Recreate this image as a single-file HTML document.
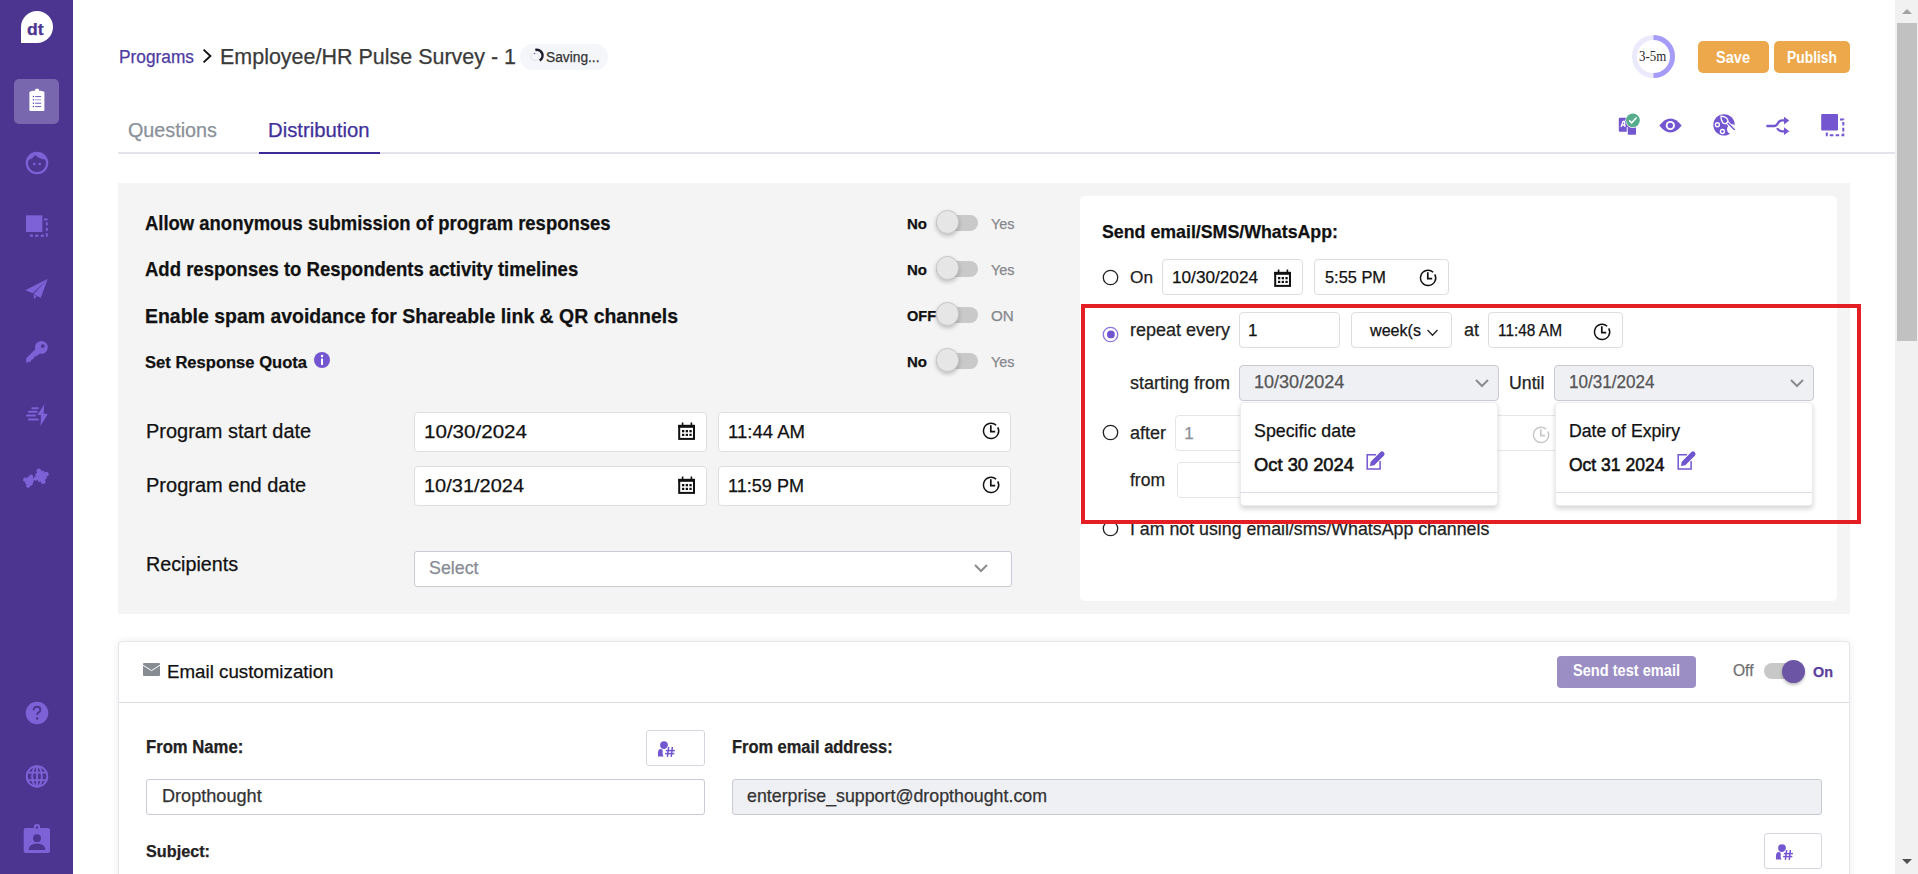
<!DOCTYPE html>
<html><head><meta charset="utf-8"><style>
html,body{margin:0;padding:0;width:1918px;height:874px;overflow:hidden;background:#fff;font-family:"Liberation Sans",sans-serif;}
.t{position:absolute;white-space:nowrap;-webkit-text-stroke-width:0.25px;}
.b{position:absolute;box-sizing:border-box;}
</style></head><body>
<div class="b" style="left:0px;top:0px;width:73px;height:874px;background:#4b3590;"></div>
<div class="b" style="left:21px;top:11px;width:32px;height:32px;background:#fff;border-radius:16px 16px 16px 0;"></div>
<div class="t" style="left:27px;top:21px;font-size:16.5px;line-height:16.5px;font-weight:700;color:#4b3590;font-family:'Liberation Sans', sans-serif;transform:scaleX(1.0656);transform-origin:0 0;">dt</div>
<div class="b" style="left:14px;top:79px;width:45px;height:45px;background:#7867ae;border-radius:5px;"></div>
<svg class="b" style="left:14px;top:79px" width="45" height="45" viewBox="0 0 45 45">
<rect x="15.4" y="12.6" width="15" height="19.3" rx="1" fill="#fff"/>
<path d="M16.2 13.5 Q16.8 11.7 19 11.7 H26.8 Q29 11.7 29.6 13.5Z" fill="#fff"/>
<rect x="21.1" y="9.8" width="3.9" height="2.8" rx="1" fill="#fff"/>
<g fill="#5546b0"><rect x="18.8" y="16.9" width="1.3" height="1.3"/><rect x="18.8" y="20.1" width="1.3" height="1.3"/><rect x="18.8" y="23.6" width="1.3" height="1.3"/><rect x="18.8" y="26.9" width="1.3" height="1.3"/></g>
<g fill="#7b6bc2"><rect x="21.1" y="17" width="6" height="1.1"/><rect x="21.1" y="20.2" width="6" height="1.1" opacity="0.6"/><rect x="21.1" y="23.7" width="6" height="1.1"/><rect x="21.1" y="27" width="6" height="1.1"/></g>
</svg>
<svg class="b" style="left:24px;top:150px" width="26" height="26" viewBox="0 0 26 26">
<circle cx="13" cy="13" r="10.2" fill="none" stroke="#7c62d6" stroke-width="2.2"/>
<path d="M3.5 10 Q8.5 9.5 11 5 Q15 9.2 22.8 9.8 Q21.5 3.5 13 2.5 Q5 3 3.5 10Z" fill="#7c62d6"/>
<circle cx="10.3" cy="14" r="1.3" fill="#7c62d6"/><circle cx="15.7" cy="14" r="1.3" fill="#7c62d6"/>
</svg>
<svg class="b" style="left:24px;top:213px" width="26" height="26" viewBox="0 0 26 26">
<rect x="2" y="2.3" width="16.4" height="16.7" fill="#7c62d6"/>
<path d="M20 6.5 H22.8 V22.8 H7 V20.5" fill="none" stroke="#7c62d6" stroke-width="1.9" stroke-dasharray="3.2 2.3"/>
</svg>
<svg class="b" style="left:24px;top:277px" width="26" height="26" viewBox="0 0 26 26">
<path d="M1.3 13.2 L23.8 1.8 L8.8 16.2Z" fill="#7c62d6"/>
<path d="M23.8 1.8 L16.7 21 L9.6 16.9Z" fill="#7c62d6"/>
<path d="M9.6 17.6 L12.7 19.3 L10 22.3Z" fill="#7c62d6"/>
</svg>
<svg class="b" style="left:22px;top:337px" width="30" height="30" viewBox="0 0 30 30">
<circle cx="19.4" cy="10.4" r="6.4" fill="#7c62d6"/><circle cx="20.8" cy="9.1" r="1.9" fill="#4b3590"/>
<path d="M13.4 12.1 L17.8 16.5 L15.8 18.5 L12 19.9 L12 21.6 L9.1 22.9 L9.1 24.4 L4.2 25.8 L4.1 21.4 Z" fill="#7c62d6"/>
</svg>
<svg class="b" style="left:24px;top:402px" width="26" height="26" viewBox="0 0 26 26">
<path d="M20.3 2.5 L13.3 13 L17 13.3 L16.5 23.9 L23.8 11.9 L19.5 11.6Z" fill="#7c62d6"/>
<g stroke="#7c62d6" stroke-width="2" stroke-linecap="round"><line x1="8.3" y1="6.2" x2="13.8" y2="6.2"/><line x1="4.8" y1="9.8" x2="12.8" y2="9.8"/><line x1="3" y1="13.6" x2="11.2" y2="13.6"/><line x1="4.8" y1="17.6" x2="13.8" y2="17.6"/></g>
</svg>
<svg class="b" style="left:20px;top:463px" width="32" height="30" viewBox="0 0 32 30">
<g fill="#7c62d6" transform="rotate(-22 21 13.3)"><rect x="16.4" y="8.7" width="9.2" height="9.2" rx="1"/><circle cx="21" cy="7.6" r="2.4"/><circle cx="26.7" cy="13.3" r="2.4"/><circle cx="21" cy="19" r="2.4"/><circle cx="15.3" cy="13.3" r="2.2"/></g>
<g fill="#7c62d6" transform="rotate(18 9.6 18.2)"><rect x="5.8" y="14.4" width="7.6" height="7.6" rx="1"/><circle cx="9.6" cy="13.5" r="2.1"/><circle cx="4.9" cy="18.2" r="2.1"/><circle cx="9.6" cy="22.9" r="2.1"/></g>
</svg>
<svg class="b" style="left:25px;top:701px" width="24" height="24" viewBox="0 0 24 24">
<circle cx="12" cy="12" r="11.3" fill="#7c62d6"/>
<path d="M8.6 9.3 Q8.6 5.8 12 5.8 Q15.4 5.8 15.4 8.8 Q15.4 10.6 13.4 11.6 Q12.2 12.3 12.2 14" fill="none" stroke="#4b3590" stroke-width="1.9"/>
<circle cx="12.2" cy="17.5" r="1.3" fill="#4b3590"/>
</svg>
<svg class="b" style="left:25px;top:765px" width="24" height="23" viewBox="0 0 24 23">
<g fill="none" stroke="#7c62d6" stroke-width="1.9"><circle cx="12" cy="11.4" r="10.3"/><ellipse cx="12" cy="11.4" rx="4.8" ry="10.3"/>
<line x1="1.7" y1="7.6" x2="22.3" y2="7.6"/><line x1="1.7" y1="15.2" x2="22.3" y2="15.2"/><line x1="12" y1="1" x2="12" y2="21.8"/></g>
</svg>
<svg class="b" style="left:23px;top:823px" width="28" height="32" viewBox="0 0 28 32">
<rect x="0.7" y="5" width="26.3" height="25" rx="2" fill="#7c62d6"/>
<circle cx="14" cy="4.3" r="3.2" fill="#7c62d6"/><circle cx="14" cy="4.5" r="1.2" fill="#4b3590"/>
<circle cx="14" cy="15.2" r="3.9" fill="#4b3590"/><path d="M5.5 27 Q6 20.5 14 20.5 Q22 20.5 22.5 27Z" fill="#4b3590"/>
</svg>
<div class="b" style="left:1895px;top:0px;width:23px;height:874px;background:#f1f1f1;"></div>
<div class="b" style="left:1897px;top:23px;width:20px;height:318px;background:#c1c1c1;"></div>
<svg class="b" style="left:1900px;top:6px" width="14" height="10"><path d="M2 8 L7 3 L12 8Z" fill="#a3a3a3"/></svg>
<svg class="b" style="left:1900px;top:857px" width="14" height="10"><path d="M2 2 L7 7 L12 2Z" fill="#505050"/></svg>
<div class="t" style="left:118.8px;top:49px;font-size:17.6px;line-height:17.6px;font-weight:400;color:#4e3ca2;font-family:'Liberation Sans', sans-serif;transform:scaleX(0.9834);transform-origin:0 0;">Programs</div>
<svg class="b" style="left:200px;top:47px" width="14" height="20"><path d="M3.6 2.6 L10.4 9 L3.6 15.4" fill="none" stroke="#111" stroke-width="1.9"/></svg>
<div class="t" style="left:219.8px;top:46px;font-size:22.2px;line-height:22.2px;font-weight:400;color:#3a3a3a;font-family:'Liberation Sans', sans-serif;transform:scaleX(0.9679);transform-origin:0 0;">Employee/HR Pulse Survey - 1</div>
<div class="b" style="left:520px;top:44px;width:88px;height:26px;background:#f5f6f9;border-radius:13px;"></div>
<svg class="b" style="left:528px;top:46px" width="18" height="18" viewBox="0 0 18 18"><circle cx="6.8" cy="10.8" r="3.8" fill="none" stroke="#e6e6ee" stroke-width="1.2"/><circle cx="6.6" cy="7.6" r="0.7" fill="#5a3fc0"/><path d="M7.31 3.95 A5.75 5.75 0 0 1 11.68 14.48" fill="none" stroke="#1f1b2e" stroke-width="2.5"/></svg>
<div class="t" style="left:545.5px;top:50px;font-size:14px;line-height:14px;font-weight:400;color:#333;font-family:'Liberation Sans', sans-serif;transform:scaleX(0.9819);transform-origin:0 0;">Saving...</div>
<svg class="b" style="left:1632px;top:35px" width="43" height="43" viewBox="0 0 43 43"><circle cx="21.5" cy="21.5" r="19" fill="none" stroke="#ebe9fc" stroke-width="5"/><path d="M21.5 2.5 A19 19 0 0 1 21.5 40.5" fill="none" stroke="#a49cf7" stroke-width="5"/></svg>
<div class="t" style="left:1638.8px;top:49px;font-size:14.8px;line-height:14.8px;font-weight:400;color:#2a2a2a;font-family:'Liberation Serif', serif;-webkit-text-stroke-width:0;transform:scaleX(0.8708);transform-origin:0 0;">3-5m</div>
<div class="b" style="left:1698px;top:41px;width:71px;height:32px;background:#eca84a;border-radius:5px;"></div>
<div class="t" style="left:1716.4px;top:50px;font-size:15.6px;line-height:15.6px;font-weight:700;color:#fff;font-family:'Liberation Sans', sans-serif;-webkit-text-stroke-width:0;transform:scaleX(0.9335);transform-origin:0 0;">Save</div>
<div class="b" style="left:1774px;top:41px;width:76px;height:32px;background:#eca84a;border-radius:5px;"></div>
<div class="t" style="left:1787.3px;top:50px;font-size:15.6px;line-height:15.6px;font-weight:700;color:#fff;font-family:'Liberation Sans', sans-serif;-webkit-text-stroke-width:0;transform:scaleX(0.8877);transform-origin:0 0;">Publish</div>
<div class="t" style="left:128px;top:120px;font-size:20px;line-height:20px;font-weight:400;color:#8a9199;font-family:'Liberation Sans', sans-serif;transform:scaleX(0.9882);transform-origin:0 0;">Questions</div>
<div class="t" style="left:268px;top:120px;font-size:20.3px;line-height:20.3px;font-weight:400;color:#40309a;font-family:'Liberation Sans', sans-serif;transform:scaleX(1.0005);transform-origin:0 0;">Distribution</div>
<div class="b" style="left:118px;top:152px;width:1777px;height:2px;background:#e3e3ec;"></div>
<div class="b" style="left:259px;top:152px;width:121px;height:2px;background:#3b2a96;"></div>
<svg class="b" style="left:1614px;top:110px" width="30" height="30" viewBox="0 0 30 30">
<rect x="4.8" y="7.7" width="9.3" height="14.1" rx="1" fill="#7356d0"/>
<rect x="13.7" y="14" width="8.3" height="10.7" rx="1" fill="#7356d0"/>
<path d="M13.2 17 V22.5 L11.5 23.3 L13.6 24.8" fill="none" stroke="#fff" stroke-width="1"/>
<path d="M7 17 L9 11.5 L10.3 11.5 L11 17 M7.8 15 H10.6" fill="none" stroke="#fff" stroke-width="1.3"/>
<circle cx="18.9" cy="10.3" r="7.6" fill="#fff"/>
<circle cx="18.9" cy="10.3" r="6.9" fill="#55ad8c"/>
<path d="M15.2 10.4 L17.6 12.8 L22.6 7.5" fill="none" stroke="#fff" stroke-width="1.5"/>
</svg>
<svg class="b" style="left:1659px;top:117px" width="23" height="17" viewBox="0 0 23 17">
<path d="M0.3 8.5 Q11.5 -5.5 22.7 8.5 Q11.5 22.5 0.3 8.5Z" fill="#7356d0"/><circle cx="11.3" cy="8.5" r="4.6" fill="#fff"/><circle cx="11.3" cy="8.5" r="2.7" fill="#7356d0"/>
</svg>
<svg class="b" style="left:1710px;top:110px" width="30" height="30" viewBox="0 0 30 30">
<circle cx="14.05" cy="14.9" r="10.7" fill="#7356d0"/><circle cx="22" cy="19.2" r="5" fill="#fff"/>
<circle cx="7.4" cy="14.75" r="2" fill="none" stroke="#fff" stroke-width="1.3"/>
<circle cx="12.4" cy="21.5" r="2" fill="none" stroke="#fff" stroke-width="1.3"/>
<line x1="17.5" y1="12.8" x2="24.3" y2="19.6" stroke="#fff" stroke-width="3.4" stroke-linecap="round"/>
<line x1="17.5" y1="12.8" x2="24.3" y2="19.6" stroke="#7356d0" stroke-width="1.4" stroke-linecap="round"/>
<path d="M11 6.2 Q17 6.6 18 10.8 A3.2 3.2 0 0 1 12.8 12.8 Q10.6 9.6 11 6.2Z" fill="#7356d0" stroke="#fff" stroke-width="1.3"/>
</svg>
<svg class="b" style="left:1763px;top:110px" width="30" height="30" viewBox="0 0 30 30">
<path d="M4.3 16 H11.5 Q12.8 16 14 14.5 L15.5 12.3 Q17 10.3 19 10.3 H22" fill="none" stroke="#7356d0" stroke-width="2.3" stroke-linecap="round"/>
<path d="M14.6 18.9 Q16.3 21.2 19.5 21.3 H22" fill="none" stroke="#7356d0" stroke-width="2.3" stroke-linecap="round"/>
<path d="M21 6.7 L26.3 10.5 L21 14.5Z" fill="#7356d0"/><path d="M21 17.3 L26.3 21.3 L21 25Z" fill="#7356d0"/>
</svg>
<svg class="b" style="left:1821px;top:114px" width="24" height="23" viewBox="0 0 24 23">
<rect x="0.2" y="0" width="16.8" height="16.6" rx="1" fill="#7356d0"/>
<path d="M19 5.5 H22.3 V21.3 H5.8 V18.5" fill="none" stroke="#7356d0" stroke-width="2" stroke-dasharray="3.6 2.2"/>
</svg>
<div class="b" style="left:118px;top:183px;width:1732px;height:431px;background:#f4f4f4;"></div>
<div class="t" style="left:145.4px;top:213px;font-size:20.6px;line-height:20.6px;font-weight:700;color:#111;font-family:'Liberation Sans', sans-serif;transform:scaleX(0.8960);transform-origin:0 0;">Allow anonymous submission of program responses</div>
<div class="t" style="left:145.4px;top:259px;font-size:20.6px;line-height:20.6px;font-weight:700;color:#111;font-family:'Liberation Sans', sans-serif;transform:scaleX(0.8992);transform-origin:0 0;">Add responses to Respondents activity timelines</div>
<div class="t" style="left:145.4px;top:306px;font-size:20.6px;line-height:20.6px;font-weight:700;color:#111;font-family:'Liberation Sans', sans-serif;transform:scaleX(0.9446);transform-origin:0 0;">Enable spam avoidance for Shareable link &amp; QR channels</div>
<div class="t" style="left:145.4px;top:354px;font-size:17.4px;line-height:17.4px;font-weight:700;color:#111;font-family:'Liberation Sans', sans-serif;transform:scaleX(0.9525);transform-origin:0 0;">Set Response Quota</div>
<svg class="b" style="left:314px;top:352px" width="16" height="16" viewBox="0 0 16 16"><circle cx="8" cy="8" r="8" fill="#7356d0"/><rect x="7" y="6.5" width="2" height="6.5" fill="#fff"/><circle cx="8" cy="4" r="1.2" fill="#fff"/></svg>
<div class="t" style="left:907px;top:217px;font-size:14.6px;line-height:14.6px;font-weight:700;color:#111;font-family:'Liberation Sans', sans-serif;transform:scaleX(1.0273);transform-origin:0 0;">No</div>
<div class="b" style="left:936px;top:215px;width:42px;height:15.699999999999989px;background:#c9c9c9;border-radius:8px;"></div>
<div class="b" style="left:935.8px;top:210.3px;width:23.5px;height:23.5px;background:#e6e6e6;border-radius:50%;box-shadow:0 2px 4px rgba(0,0,0,0.22);border:1px solid #c8c8c8;"></div>
<div class="t" style="left:991px;top:217px;font-size:14.8px;line-height:14.8px;font-weight:400;color:#85878c;font-family:'Liberation Sans', sans-serif;transform:scaleX(0.9735);transform-origin:0 0;">Yes</div>
<div class="t" style="left:907px;top:263px;font-size:14.6px;line-height:14.6px;font-weight:700;color:#111;font-family:'Liberation Sans', sans-serif;transform:scaleX(1.0273);transform-origin:0 0;">No</div>
<div class="b" style="left:936px;top:261px;width:42px;height:15.699999999999989px;background:#c9c9c9;border-radius:8px;"></div>
<div class="b" style="left:935.8px;top:256.3px;width:23.5px;height:23.5px;background:#e6e6e6;border-radius:50%;box-shadow:0 2px 4px rgba(0,0,0,0.22);border:1px solid #c8c8c8;"></div>
<div class="t" style="left:991px;top:263px;font-size:14.8px;line-height:14.8px;font-weight:400;color:#85878c;font-family:'Liberation Sans', sans-serif;transform:scaleX(0.9735);transform-origin:0 0;">Yes</div>
<div class="t" style="left:907px;top:309px;font-size:14.6px;line-height:14.6px;font-weight:700;color:#111;font-family:'Liberation Sans', sans-serif;transform:scaleX(0.9936);transform-origin:0 0;">OFF</div>
<div class="b" style="left:936px;top:307px;width:42px;height:15.699999999999989px;background:#c9c9c9;border-radius:8px;"></div>
<div class="b" style="left:935.8px;top:302.3px;width:23.5px;height:23.5px;background:#e6e6e6;border-radius:50%;box-shadow:0 2px 4px rgba(0,0,0,0.22);border:1px solid #c8c8c8;"></div>
<div class="t" style="left:991px;top:309px;font-size:14.8px;line-height:14.8px;font-weight:400;color:#85878c;font-family:'Liberation Sans', sans-serif;transform:scaleX(1.0269);transform-origin:0 0;">ON</div>
<div class="t" style="left:907px;top:355px;font-size:14.6px;line-height:14.6px;font-weight:700;color:#111;font-family:'Liberation Sans', sans-serif;transform:scaleX(1.0273);transform-origin:0 0;">No</div>
<div class="b" style="left:936px;top:353px;width:42px;height:15.699999999999989px;background:#c9c9c9;border-radius:8px;"></div>
<div class="b" style="left:935.8px;top:348.3px;width:23.5px;height:23.5px;background:#e6e6e6;border-radius:50%;box-shadow:0 2px 4px rgba(0,0,0,0.22);border:1px solid #c8c8c8;"></div>
<div class="t" style="left:991px;top:355px;font-size:14.8px;line-height:14.8px;font-weight:400;color:#85878c;font-family:'Liberation Sans', sans-serif;transform:scaleX(0.9735);transform-origin:0 0;">Yes</div>
<div class="t" style="left:145.6px;top:422px;font-size:19.6px;line-height:19.6px;font-weight:400;color:#111;font-family:'Liberation Sans', sans-serif;transform:scaleX(1.0181);transform-origin:0 0;">Program start date</div>
<div class="t" style="left:145.6px;top:476px;font-size:19.6px;line-height:19.6px;font-weight:400;color:#111;font-family:'Liberation Sans', sans-serif;transform:scaleX(1.0213);transform-origin:0 0;">Program end date</div>
<div class="b" style="left:414px;top:412px;width:293px;height:40px;background:#fff;border:1px solid #dedede;border-radius:4px;"></div>
<div class="b" style="left:718px;top:412px;width:293px;height:40px;background:#fff;border:1px solid #dedede;border-radius:4px;"></div>
<div class="b" style="left:414px;top:466px;width:293px;height:40px;background:#fff;border:1px solid #dedede;border-radius:4px;"></div>
<div class="b" style="left:718px;top:466px;width:293px;height:40px;background:#fff;border:1px solid #dedede;border-radius:4px;"></div>
<div class="t" style="left:424px;top:422px;font-size:19.2px;line-height:19.2px;font-weight:400;color:#111;font-family:'Liberation Sans', sans-serif;transform:scaleX(1.0726);transform-origin:0 0;">10/30/2024</div>
<div class="t" style="left:424px;top:476px;font-size:19.2px;line-height:19.2px;font-weight:400;color:#111;font-family:'Liberation Sans', sans-serif;transform:scaleX(1.0413);transform-origin:0 0;">10/31/2024</div>
<svg class="b" style="left:672px;top:416px" width="30" height="30" viewBox="0 0 30 30"><rect x="7.2" y="9.9" width="14.8" height="13" fill="none" stroke="#111" stroke-width="2"/><rect x="6.2" y="8.9" width="16.8" height="2.9" fill="#111"/><rect x="9.8" y="6.5" width="1.6" height="3" fill="#111"/><rect x="18.6" y="6.5" width="1.6" height="3" fill="#111"/><g fill="#111"><rect x="10" y="14" width="2.3" height="2.3"/><rect x="13.7" y="14" width="2.3" height="2.3"/><rect x="17.4" y="14" width="2.3" height="2.3"/><rect x="10" y="17.8" width="2.3" height="2.2"/><rect x="13.7" y="17.8" width="2.3" height="2.2"/><rect x="17.4" y="17.8" width="2.3" height="2.2"/></g></svg>
<svg class="b" style="left:672px;top:470px" width="30" height="30" viewBox="0 0 30 30"><rect x="7.2" y="9.9" width="14.8" height="13" fill="none" stroke="#111" stroke-width="2"/><rect x="6.2" y="8.9" width="16.8" height="2.9" fill="#111"/><rect x="9.8" y="6.5" width="1.6" height="3" fill="#111"/><rect x="18.6" y="6.5" width="1.6" height="3" fill="#111"/><g fill="#111"><rect x="10" y="14" width="2.3" height="2.3"/><rect x="13.7" y="14" width="2.3" height="2.3"/><rect x="17.4" y="14" width="2.3" height="2.3"/><rect x="10" y="17.8" width="2.3" height="2.2"/><rect x="13.7" y="17.8" width="2.3" height="2.2"/><rect x="17.4" y="17.8" width="2.3" height="2.2"/></g></svg>
<div class="t" style="left:728px;top:423px;font-size:18.5px;line-height:18.5px;font-weight:400;color:#111;font-family:'Liberation Sans', sans-serif;transform:scaleX(1.0026);transform-origin:0 0;">11:44 AM</div>
<div class="t" style="left:728px;top:477px;font-size:18.5px;line-height:18.5px;font-weight:400;color:#111;font-family:'Liberation Sans', sans-serif;transform:scaleX(0.9767);transform-origin:0 0;">11:59 PM</div>
<svg class="b" style="left:976px;top:416px" width="30" height="30" viewBox="0 0 30 30"><path d="M21.75 11.27 A7.6 7.6 0 1 1 20.19 9.3" fill="none" stroke="#111" stroke-width="1.5"/><path d="M14.8 9.3 V15.7 H19.2" fill="none" stroke="#111" stroke-width="1.7"/></svg>
<svg class="b" style="left:976px;top:470px" width="30" height="30" viewBox="0 0 30 30"><path d="M21.75 11.27 A7.6 7.6 0 1 1 20.19 9.3" fill="none" stroke="#111" stroke-width="1.5"/><path d="M14.8 9.3 V15.7 H19.2" fill="none" stroke="#111" stroke-width="1.7"/></svg>
<div class="t" style="left:145.5px;top:555px;font-size:19.5px;line-height:19.5px;font-weight:400;color:#111;font-family:'Liberation Sans', sans-serif;transform:scaleX(1.0105);transform-origin:0 0;">Recipients</div>
<div class="b" style="left:414px;top:551px;width:598px;height:36px;background:#fff;border:1px solid #c9cad3;border-radius:3px;"></div>
<div class="t" style="left:428.5px;top:560px;font-size:17.8px;line-height:17.8px;font-weight:400;color:#888b95;font-family:'Liberation Sans', sans-serif;transform:scaleX(1.0016);transform-origin:0 0;">Select</div>
<svg class="b" style="left:973px;top:563px" width="16" height="11"><path d="M2 2 L8 8 L14 2" fill="none" stroke="#8c8c8c" stroke-width="2"/></svg>
<div class="b" style="left:1080px;top:196px;width:757px;height:405px;background:#fff;border-radius:5px;"></div>
<div class="t" style="left:1102.3px;top:223px;font-size:18.6px;line-height:18.6px;font-weight:700;color:#111;font-family:'Liberation Sans', sans-serif;transform:scaleX(0.9558);transform-origin:0 0;">Send email/SMS/WhatsApp:</div>
<svg class="b" style="left:1102px;top:268.5px" width="17" height="17" viewBox="0 0 17 17"><circle cx="8.5" cy="8.5" r="7.2" fill="#fff" stroke="#222" stroke-width="1.3"/></svg>
<div class="t" style="left:1129.7px;top:269px;font-size:17.4px;line-height:17.4px;font-weight:400;color:#222;font-family:'Liberation Sans', sans-serif;transform:scaleX(0.9912);transform-origin:0 0;">On</div>
<div class="b" style="left:1162px;top:259px;width:141px;height:36px;background:#fff;border:1px solid #dedede;border-radius:4px;"></div>
<div class="t" style="left:1172.3px;top:269px;font-size:16.4px;line-height:16.4px;font-weight:400;color:#111;font-family:'Liberation Sans', sans-serif;transform:scaleX(1.0482);transform-origin:0 0;">10/30/2024</div>
<svg class="b" style="left:1267.8px;top:263.1px" width="30" height="30" viewBox="0 0 30 30"><rect x="7.2" y="9.9" width="14.8" height="13" fill="none" stroke="#111" stroke-width="2"/><rect x="6.2" y="8.9" width="16.8" height="2.9" fill="#111"/><rect x="9.8" y="6.5" width="1.6" height="3" fill="#111"/><rect x="18.6" y="6.5" width="1.6" height="3" fill="#111"/><g fill="#111"><rect x="10" y="14" width="2.3" height="2.3"/><rect x="13.7" y="14" width="2.3" height="2.3"/><rect x="17.4" y="14" width="2.3" height="2.3"/><rect x="10" y="17.8" width="2.3" height="2.2"/><rect x="13.7" y="17.8" width="2.3" height="2.2"/><rect x="17.4" y="17.8" width="2.3" height="2.2"/></g></svg>
<div class="b" style="left:1314px;top:259px;width:135px;height:36px;background:#fff;border:1px solid #dedede;border-radius:4px;"></div>
<div class="t" style="left:1324.5px;top:269px;font-size:16.4px;line-height:16.4px;font-weight:400;color:#111;font-family:'Liberation Sans', sans-serif;transform:scaleX(0.9992);transform-origin:0 0;">5:55 PM</div>
<svg class="b" style="left:1413.3px;top:263.3px" width="30" height="30" viewBox="0 0 30 30"><path d="M21.75 11.27 A7.6 7.6 0 1 1 20.19 9.3" fill="none" stroke="#111" stroke-width="1.5"/><path d="M14.8 9.3 V15.7 H19.2" fill="none" stroke="#111" stroke-width="1.7"/></svg>
<svg class="b" style="left:1102px;top:325.5px" width="17" height="17" viewBox="0 0 17 17"><circle cx="8.5" cy="8.5" r="7.2" fill="#fff" stroke="#8d74dc" stroke-width="1.3"/><circle cx="8.9" cy="8.4" r="3.9" fill="#7055cf"/></svg>
<div class="t" style="left:1129.7px;top:321px;font-size:18px;line-height:18px;font-weight:400;color:#222;font-family:'Liberation Sans', sans-serif;transform:scaleX(0.9994);transform-origin:0 0;">repeat every</div>
<div class="b" style="left:1239px;top:312px;width:101px;height:36px;background:#fff;border:1px solid #dedede;border-radius:4px;"></div>
<div class="t" style="left:1248px;top:322px;font-size:17px;line-height:17px;font-weight:400;color:#111;font-family:'Liberation Sans', sans-serif;">1</div>
<div class="b" style="left:1351px;top:312px;width:101px;height:36px;background:#fff;border:1px solid #dedede;border-radius:4px;"></div>
<div class="t" style="left:1369.7px;top:323px;font-size:16.6px;line-height:16.6px;font-weight:400;color:#111;font-family:'Liberation Sans', sans-serif;transform:scaleX(0.9703);transform-origin:0 0;">week(s</div>
<svg class="b" style="left:1426px;top:328px" width="13" height="10"><path d="M1.5 2 L6.5 7.2 L11.5 2" fill="none" stroke="#222" stroke-width="1.3"/></svg>
<div class="t" style="left:1464px;top:321px;font-size:18px;line-height:18px;font-weight:400;color:#222;font-family:'Liberation Sans', sans-serif;transform:scaleX(0.9990);transform-origin:0 0;">at</div>
<div class="b" style="left:1488px;top:312px;width:135px;height:36px;background:#fff;border:1px solid #dedede;border-radius:4px;"></div>
<div class="t" style="left:1498.2px;top:322px;font-size:16.4px;line-height:16.4px;font-weight:400;color:#111;font-family:'Liberation Sans', sans-serif;transform:scaleX(0.9405);transform-origin:0 0;">11:48 AM</div>
<svg class="b" style="left:1587.2px;top:316.5px" width="30" height="30" viewBox="0 0 30 30"><path d="M21.75 11.27 A7.6 7.6 0 1 1 20.19 9.3" fill="none" stroke="#111" stroke-width="1.5"/><path d="M14.8 9.3 V15.7 H19.2" fill="none" stroke="#111" stroke-width="1.7"/></svg>
<div class="t" style="left:1129.7px;top:374px;font-size:18px;line-height:18px;font-weight:400;color:#222;font-family:'Liberation Sans', sans-serif;transform:scaleX(0.9997);transform-origin:0 0;">starting from</div>
<div class="t" style="left:1508.8px;top:375px;font-size:17.8px;line-height:17.8px;font-weight:400;color:#222;font-family:'Liberation Sans', sans-serif;transform:scaleX(0.9978);transform-origin:0 0;">Until</div>
<svg class="b" style="left:1102px;top:423.5px" width="17" height="17" viewBox="0 0 17 17"><circle cx="8.5" cy="8.5" r="7.2" fill="#fff" stroke="#222" stroke-width="1.3"/></svg>
<div class="t" style="left:1129.7px;top:424px;font-size:18px;line-height:18px;font-weight:400;color:#222;font-family:'Liberation Sans', sans-serif;transform:scaleX(0.9991);transform-origin:0 0;">after</div>
<div class="b" style="left:1175px;top:415px;width:385px;height:36px;background:#fff;border:1px solid #e6e6e6;border-radius:4px;"></div>
<div class="t" style="left:1184.3px;top:425px;font-size:17px;line-height:17px;font-weight:400;color:#8d9099;font-family:'Liberation Sans', sans-serif;">1</div>
<svg class="b" style="left:1525.5px;top:420.1px" width="30" height="30" viewBox="0 0 30 30"><path d="M21.75 11.27 A7.6 7.6 0 1 1 20.19 9.3" fill="none" stroke="#c8c8c8" stroke-width="1.5"/><path d="M14.8 9.3 V15.7 H19.2" fill="none" stroke="#c8c8c8" stroke-width="1.7"/></svg>
<div class="t" style="left:1129.7px;top:472px;font-size:17.8px;line-height:17.8px;font-weight:400;color:#222;font-family:'Liberation Sans', sans-serif;transform:scaleX(0.9842);transform-origin:0 0;">from</div>
<div class="b" style="left:1177px;top:462px;width:123px;height:36px;background:#fff;border:1px solid #e6e6e6;border-radius:4px;"></div>
<svg class="b" style="left:1102px;top:519.5px" width="17" height="17" viewBox="0 0 17 17"><circle cx="8.5" cy="8.5" r="7.2" fill="#fff" stroke="#222" stroke-width="1.3"/></svg>
<div class="t" style="left:1129.7px;top:521px;font-size:17.8px;line-height:17.8px;font-weight:400;color:#222;font-family:'Liberation Sans', sans-serif;transform:scaleX(0.9987);transform-origin:0 0;">I am not using email/sms/WhatsApp channels</div>
<div class="b" style="left:1239px;top:365px;width:260px;height:36px;background:#eff0f4;border:1px solid #c9cad3;border-radius:4px;"></div>
<div class="t" style="left:1253.7px;top:374px;font-size:17.6px;line-height:17.6px;font-weight:400;color:#555;font-family:'Liberation Sans', sans-serif;transform:scaleX(1.0254);transform-origin:0 0;">10/30/2024</div>
<svg class="b" style="left:1474px;top:378px" width="16" height="11"><path d="M2 2 L8 8 L14 2" fill="none" stroke="#8c8c8c" stroke-width="2"/></svg>
<div class="b" style="left:1554px;top:365px;width:260px;height:36px;background:#eff0f4;border:1px solid #c9cad3;border-radius:4px;"></div>
<div class="t" style="left:1568.6px;top:374px;font-size:17.6px;line-height:17.6px;font-weight:400;color:#555;font-family:'Liberation Sans', sans-serif;transform:scaleX(0.9709);transform-origin:0 0;">10/31/2024</div>
<svg class="b" style="left:1789px;top:378px" width="16" height="11"><path d="M2 2 L8 8 L14 2" fill="none" stroke="#8c8c8c" stroke-width="2"/></svg>
<div class="b" style="left:1240px;top:401.5px;width:258px;height:104.5px;background:#fff;border-radius:4px;box-shadow:0 3px 5px rgba(0,0,0,0.16);border:1px solid #ececec;"></div>
<div class="b" style="left:1240px;top:492px;width:258px;height:1px;background:#dcdde4;"></div>
<div class="t" style="left:1254px;top:423px;font-size:17.6px;line-height:17.6px;font-weight:400;color:#111;font-family:'Liberation Sans', sans-serif;transform:scaleX(1.0124);transform-origin:0 0;">Specific date</div>
<div class="t" style="left:1254px;top:457px;font-size:17.8px;line-height:17.8px;font-weight:400;color:#111;font-family:'Liberation Sans', sans-serif;-webkit-text-stroke-width:0.55px;transform:scaleX(1.0321);transform-origin:0 0;">Oct 30 2024</div>
<svg class="b" style="left:1360px;top:448px" width="30" height="26" viewBox="0 0 30 26"><path d="M16 6.7 H7.2 V21 H20.1 V13" fill="none" stroke="#7356d0" stroke-width="1.5"/><path d="M10 18 L10.7 13.7 L20.2 4.2 A2.5 2.5 0 0 1 23.8 7.8 L14.3 17.3 Z" fill="#6f55cf"/></svg>
<div class="b" style="left:1555px;top:401.5px;width:258px;height:104.5px;background:#fff;border-radius:4px;box-shadow:0 3px 5px rgba(0,0,0,0.16);border:1px solid #ececec;"></div>
<div class="b" style="left:1555px;top:492px;width:258px;height:1px;background:#dcdde4;"></div>
<div class="t" style="left:1569px;top:423px;font-size:17.6px;line-height:17.6px;font-weight:400;color:#111;font-family:'Liberation Sans', sans-serif;transform:scaleX(1.0045);transform-origin:0 0;">Date of Expiry</div>
<div class="t" style="left:1569px;top:457px;font-size:17.8px;line-height:17.8px;font-weight:400;color:#111;font-family:'Liberation Sans', sans-serif;-webkit-text-stroke-width:0.55px;transform:scaleX(0.9846);transform-origin:0 0;">Oct 31 2024</div>
<svg class="b" style="left:1670.5px;top:448px" width="30" height="26" viewBox="0 0 30 26"><path d="M16 6.7 H7.2 V21 H20.1 V13" fill="none" stroke="#7356d0" stroke-width="1.5"/><path d="M10 18 L10.7 13.7 L20.2 4.2 A2.5 2.5 0 0 1 23.8 7.8 L14.3 17.3 Z" fill="#6f55cf"/></svg>
<div class="b" style="left:1081px;top:304px;width:780px;height:220px;border:4.5px solid #e31e24;"></div>
<div class="b" style="left:118px;top:641px;width:1732px;height:259px;background:#fff;border:1px solid #e6e6ec;border-radius:4px;box-shadow:0 0 8px rgba(0,0,0,0.08);"></div>
<div class="b" style="left:119px;top:702px;width:1730px;height:1px;background:#dcdde4;"></div>
<svg class="b" style="left:143px;top:663px" width="17" height="13" viewBox="0 0 17 13"><rect x="0" y="0" width="17" height="13" rx="1" fill="#878b93"/><path d="M0 2.2 L8.5 7.6 L17 2.2" fill="none" stroke="#fff" stroke-width="1"/></svg>
<div class="t" style="left:166.5px;top:663px;font-size:18.8px;line-height:18.8px;font-weight:400;color:#111;font-family:'Liberation Sans', sans-serif;transform:scaleX(0.9969);transform-origin:0 0;">Email customization</div>
<div class="b" style="left:1557px;top:656px;width:139px;height:32px;background:#9b8ec4;border-radius:4px;"></div>
<div class="t" style="left:1572.5px;top:663px;font-size:15.6px;line-height:15.6px;font-weight:700;color:#fff;font-family:'Liberation Sans', sans-serif;-webkit-text-stroke-width:0;transform:scaleX(0.9353);transform-origin:0 0;">Send test email</div>
<div class="t" style="left:1732.7px;top:663px;font-size:15.6px;line-height:15.6px;font-weight:400;color:#6f6f6f;font-family:'Liberation Sans', sans-serif;transform:scaleX(0.9992);transform-origin:0 0;">Off</div>
<div class="b" style="left:1764px;top:663px;width:28px;height:16px;background:#c8c8c8;border-radius:8px;"></div>
<div class="b" style="left:1782px;top:659.5px;width:23px;height:23.0px;background:#6c55a5;border-radius:50%;box-shadow:0 2px 3px rgba(0,0,0,0.25);"></div>
<div class="t" style="left:1812.8px;top:664px;font-size:15.4px;line-height:15.4px;font-weight:700;color:#5b3f9c;font-family:'Liberation Sans', sans-serif;transform:scaleX(0.9357);transform-origin:0 0;">On</div>
<div class="t" style="left:146.3px;top:739px;font-size:17.6px;line-height:17.6px;font-weight:700;color:#222;font-family:'Liberation Sans', sans-serif;transform:scaleX(0.9468);transform-origin:0 0;">From Name:</div>
<div class="b" style="left:646px;top:730px;width:59px;height:36px;background:#fff;border:1px solid #d6d6de;border-radius:3px;"></div>
<svg class="b" style="left:652px;top:736px" width="30" height="26" viewBox="0 0 30 26"><circle cx="12" cy="9.1" r="3.9" fill="#7356d0"/><path d="M12.5 13.8 L17.5 9 L17.5 14Z" fill="#fff"/><path d="M6 20.5 Q5.6 15 7 13.6 Q8.5 12.6 10.2 13.4 Q11.2 14.2 10.6 17 Q10.6 19.5 11.6 20.5Z" fill="#7356d0"/><g stroke="#7356d0" stroke-width="1.5"><line x1="16.6" y1="11" x2="15.4" y2="20.8"/><line x1="20.4" y1="11" x2="19.2" y2="20.8"/><line x1="13.8" y1="14.6" x2="22.9" y2="14.6"/><line x1="13.1" y1="17.6" x2="22.3" y2="17.6"/></g></svg>
<div class="b" style="left:146px;top:779px;width:559px;height:36px;background:#fff;border:1px solid #c9cad3;border-radius:3px;"></div>
<div class="t" style="left:161.5px;top:787px;font-size:18.2px;line-height:18.2px;font-weight:400;color:#333;font-family:'Liberation Sans', sans-serif;transform:scaleX(0.9959);transform-origin:0 0;">Dropthought</div>
<div class="t" style="left:731.9px;top:739px;font-size:17.6px;line-height:17.6px;font-weight:700;color:#222;font-family:'Liberation Sans', sans-serif;transform:scaleX(0.9332);transform-origin:0 0;">From email address:</div>
<div class="b" style="left:732px;top:779px;width:1090px;height:36px;background:#eff0f4;border:1px solid #c9cad3;border-radius:3px;"></div>
<div class="t" style="left:746.5px;top:788px;font-size:17.8px;line-height:17.8px;font-weight:400;color:#333;font-family:'Liberation Sans', sans-serif;transform:scaleX(1.0008);transform-origin:0 0;">enterprise_support@dropthought.com</div>
<div class="t" style="left:146.3px;top:843px;font-size:17.4px;line-height:17.4px;font-weight:700;color:#222;font-family:'Liberation Sans', sans-serif;transform:scaleX(0.9328);transform-origin:0 0;">Subject:</div>
<div class="b" style="left:1764px;top:833px;width:58px;height:36px;background:#fff;border:1px solid #d6d6de;border-radius:3px;"></div>
<svg class="b" style="left:1770px;top:839px" width="30" height="26" viewBox="0 0 30 26"><circle cx="12" cy="9.1" r="3.9" fill="#7356d0"/><path d="M12.5 13.8 L17.5 9 L17.5 14Z" fill="#fff"/><path d="M6 20.5 Q5.6 15 7 13.6 Q8.5 12.6 10.2 13.4 Q11.2 14.2 10.6 17 Q10.6 19.5 11.6 20.5Z" fill="#7356d0"/><g stroke="#7356d0" stroke-width="1.5"><line x1="16.6" y1="11" x2="15.4" y2="20.8"/><line x1="20.4" y1="11" x2="19.2" y2="20.8"/><line x1="13.8" y1="14.6" x2="22.9" y2="14.6"/><line x1="13.1" y1="17.6" x2="22.3" y2="17.6"/></g></svg>
</body></html>
